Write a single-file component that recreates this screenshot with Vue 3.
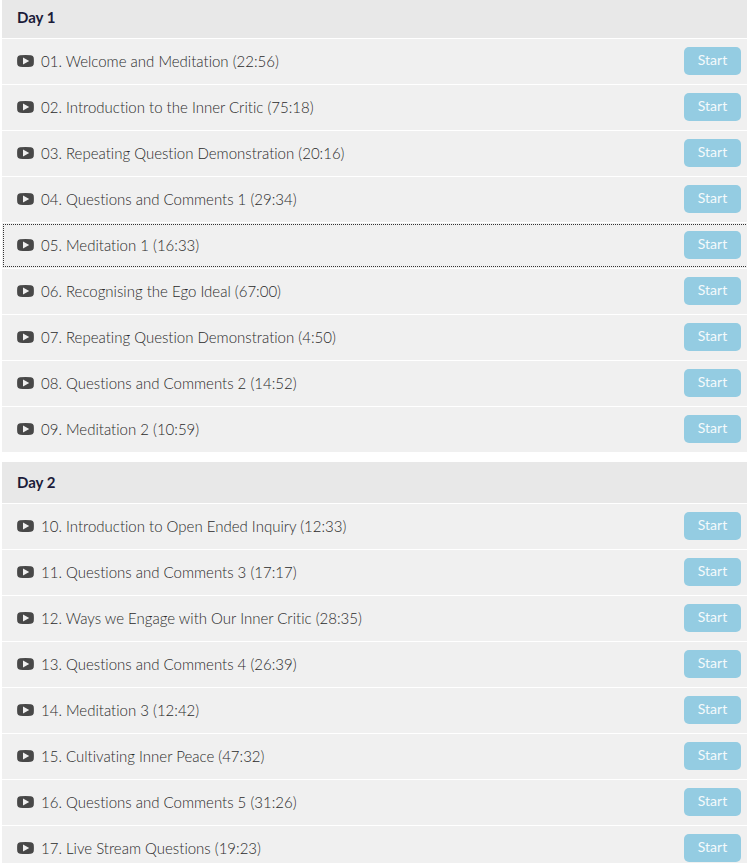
<template>
  <main class="curriculum">
    <section v-for="day in days" :key="day.title" class="course-section">
      <h2 class="section-title">{{ day.title }}</h2>
      <ul class="section-list">
        <li v-for="item in day.lectures" :key="item.id" class="section-item">
          <a
            href="#"
            class="item"
            :class="{ focused: item.id === currentId }"
            @click.prevent="currentId = item.id"
          >
            <svg class="item-icon" viewBox="0 0 17 12" aria-hidden="true">
              <path
                fill-rule="evenodd"
                d="M3 .3Q8.500-.2 14 .3Q16.300.500 16.700 2.500Q17.100 6 16.700 9.500Q16.300 11.500 14 11.700Q8.500 12.200 3 11.700Q.700 11.500.300 9.500Q-.1 6 .300 2.500Q.700.500 3 .3ZM6 2.400V9.600L12.200 6Z"
              />
            </svg>
            <span class="item-name">{{ item.name }}</span>
            <span class="start-btn">Start</span>
          </a>
        </li>
      </ul>
    </section>
  </main>
</template>

<script setup>
import { ref } from "vue";

const currentId = ref(5);

const days = [
  {
    title: "Day 1",
    lectures: [
      { id: 1, name: "01. Welcome and Meditation (22:56)" },
      { id: 2, name: "02. Introduction to the Inner Critic (75:18)" },
      { id: 3, name: "03. Repeating Question Demonstration (20:16)" },
      { id: 4, name: "04. Questions and Comments 1 (29:34)" },
      { id: 5, name: "05. Meditation 1 (16:33)" },
      { id: 6, name: "06. Recognising the Ego Ideal (67:00)" },
      { id: 7, name: "07. Repeating Question Demonstration (4:50)" },
      { id: 8, name: "08. Questions and Comments 2 (14:52)" },
      { id: 9, name: "09. Meditation 2 (10:59)" },
    ],
  },
  {
    title: "Day 2",
    lectures: [
      { id: 10, name: "10. Introduction to Open Ended Inquiry (12:33)" },
      { id: 11, name: "11. Questions and Comments 3 (17:17)" },
      { id: 12, name: "12. Ways we Engage with Our Inner Critic (28:35)" },
      { id: 13, name: "13. Questions and Comments 4 (26:39)" },
      { id: 14, name: "14. Meditation 3 (12:42)" },
      { id: 15, name: "15. Cultivating Inner Peace (47:32)" },
      { id: 16, name: "16. Questions and Comments 5 (31:26)" },
      { id: 17, name: "17. Live Stream Questions (19:23)" },
    ],
  },
];
</script>

<style>
body {
  background: #fff;
}
</style>

<style scoped>
.curriculum {
  padding-left: 2px;
  overflow: hidden;
  font-family: Lato, sans-serif;
  font-variant-ligatures: none;
}

.course-section {
  margin-bottom: 10px;
}

.section-title {
  margin: 0;
  padding: 10px 15px 11px;
  background: #e8e8e8;
  color: #1c1c3a;
  font-size: 15px;
  font-weight: 700;
  line-height: 20px;
}

.course-section:first-child .section-title {
  padding-top: 7px;
}

.section-list {
  margin: 0 -2px 0 0;
  padding: 0;
  list-style: none;
}

.section-item {
  border-top: 1px solid #fff;
}

.item {
  display: flex;
  align-items: center;
  padding: 8px 8px 9px 15px;
  background: #f0f0f0;
  color: #2b2b2b;
  font-size: 15px;
  font-weight: 300;
  text-decoration: none;
}

.item.focused {
  outline: 1px dotted #333;
  outline-offset: -2px;
}

.item-icon {
  width: 17px;
  height: 12px;
  margin-right: 7px;
  fill: #484848;
}

.item-name {
  flex: 1;
}

.start-btn {
  width: 57px;
  padding-bottom: 2px;
  border-radius: 5px;
  background: #94cce2;
  color: #f4fafc;
  font-size: 14px;
  font-weight: 400;
  line-height: 26px;
  text-align: center;
}
</style>
